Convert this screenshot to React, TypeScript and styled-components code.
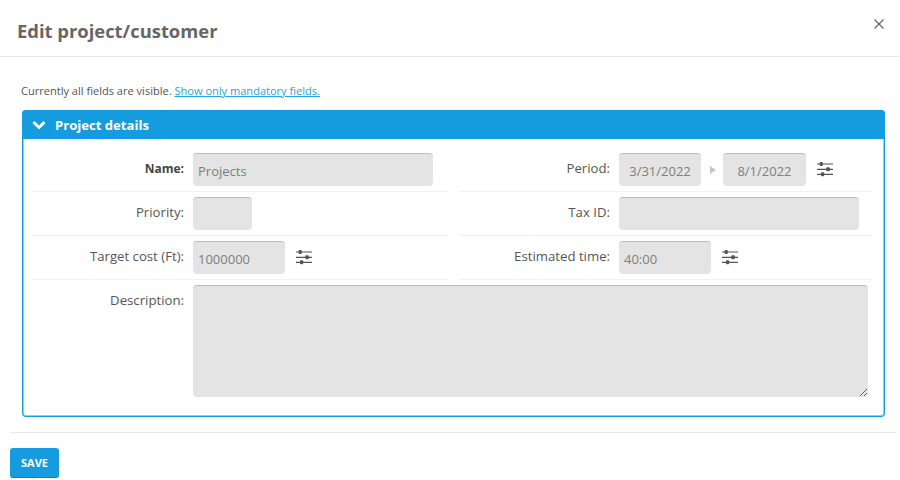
import styled, { createGlobalStyle } from "styled-components";

const GlobalStyle = createGlobalStyle`
  html, body {
    margin: 0;
    padding: 0;
    background: #fff;
    overflow: hidden;
  }
  body {
    font-family: "Open Sans", "Liberation Sans", sans-serif;
    color: #555;
  }
  * {
    box-sizing: border-box;
  }
`;

const Page = styled.div`
  width: 900px;
  height: 480px;
`;

const Header = styled.header`
  height: 57px;
  display: flex;
  align-items: flex-start;
  justify-content: space-between;
  padding: 18px 15px 0 17px;
  border-bottom: 1px solid #e9e9e9;
`;

const Title = styled.h1`
  margin: 0;
  font-size: 18.4px;
  line-height: 26px;
  font-weight: 700;
  color: #666;
`;

const CloseButton = styled.button`
  border: none;
  background: none;
  padding: 0;
  width: 12px;
  height: 12px;
  display: flex;
  color: #666;
`;

const Content = styled.div`
  padding: 25px 15px 0 22px;
`;

const Notice = styled.p`
  margin: 0 0 11px -1px;
  font-size: 11.05px;
  line-height: 17px;
  color: #555;
`;

const NoticeLink = styled.a`
  color: #25a5e4;
  text-decoration: underline;
`;

const Panel = styled.section`
  width: 863px;
  height: 307px;
  border: 1px solid #149cde;
  border-top: none;
  border-radius: 4px;
  box-shadow: inset 1px 0 0 #8fd0f1, inset -1px 0 0 #8fd0f1, inset 0 -1px 0 #8fd0f1;
`;

const PanelHeader = styled.div`
  height: 29px;
  margin: 0 -1px;
  padding-left: 10px;
  display: flex;
  align-items: center;
  gap: 9px;
  background: #149cde;
  border-radius: 4px 4px 0 0;
  color: #fff;
  font-size: 13.1px;
  font-weight: 700;
`;

const PanelBody = styled.div`
  padding: 9px 11px 0 9px;
`;

const FieldGrid = styled.div`
  display: grid;
  grid-template-columns: 416px 414px;
  column-gap: 11px;
`;

const Row = styled.div`
  height: 44px;
  padding: 5px 0;
  display: flex;
  align-items: flex-start;
  gap: 9px;
  border-bottom: 1px solid #f1f1f1;
`;

const DescriptionRow = styled(Row)`
  height: auto;
  padding: 5px 0 0;
  border-bottom: none;
`;

const Label = styled.label<{ $bold?: boolean; $width: number }>`
  width: ${(props) => props.$width}px;
  flex: none;
  padding-top: ${(props) => (props.$bold ? 7 : 6)}px;
  text-align: right;
  font-size: ${(props) => (props.$bold ? 12 : 13.2)}px;
  line-height: 18px;
  font-weight: ${(props) => (props.$bold ? 700 : 400)};
  color: ${(props) => (props.$bold ? "#444" : "#555")};
`;

const fieldStyles = `
  display: block;
  border: none;
  border-top: 1px solid #bdbdbd;
  border-radius: 4px;
  background: #e4e4e4;
  outline: none;
  font-family: "Open Sans", "Liberation Sans", sans-serif;
  font-size: 13px;
  color: #78837a;
`;

const Input = styled.input<{ $width: number; $center?: boolean }>`
  ${fieldStyles}
  width: ${(props) => props.$width}px;
  height: 33px;
  padding: 1px ${(props) => (props.$center ? 0 : 5)}px 0;
  text-align: ${(props) => (props.$center ? "center" : "left")};
`;

const TextArea = styled.textarea`
  ${fieldStyles}
  width: 675px;
  height: 112px;
  padding: 5px;
  resize: vertical;
`;

const FieldGroup = styled.div`
  display: flex;
  align-items: center;
  height: 33px;
`;

const RangeArrow = styled.span`
  width: 0;
  height: 0;
  margin: 0 7px 0 9px;
  border-style: solid;
  border-width: 4.5px 0 4.5px 6px;
  border-color: transparent transparent transparent #c4c4c4;
`;

const Tune = styled.svg`
  width: 16px;
  height: 15px;
  margin-left: 11px;
  flex: none;
  color: #555;
`;

const Footer = styled.footer`
  margin: 15px 4px 0 10px;
  padding-top: 15px;
  border-top: 1px solid #e9e9e9;
`;

const SaveButton = styled.button`
  width: 49px;
  height: 30px;
  padding: 0;
  border: none;
  border-bottom: 1px solid #0f7fb6;
  border-radius: 3px;
  background: #149cde;
  color: #fff;
  font-family: "Open Sans", "Liberation Sans", sans-serif;
  font-size: 11px;
  font-weight: 700;
`;

function TuneIcon() {
  return (
    <Tune viewBox="0 0 16 15" aria-hidden="true">
      <path d="M0 2H16M0 7.3H16M0 12.3H16" stroke="currentColor" strokeWidth="1.2" fill="none" />
      <rect x="2.6" y="0" width="3.2" height="4" rx="1" fill="currentColor" />
      <rect x="9.3" y="5.3" width="3.6" height="4" rx="1" fill="currentColor" />
      <rect x="4" y="10.3" width="3.2" height="4" rx="1" fill="currentColor" />
    </Tune>
  );
}

export default function App() {
  return (
    <Page>
      <GlobalStyle />
      <Header>
        <Title>Edit project/customer</Title>
        <CloseButton aria-label="Close">
          <svg viewBox="0 0 12 12" width="12" height="12" aria-hidden="true">
            <path d="M1.5 1.5L10.5 10.5M10.5 1.5L1.5 10.5" stroke="currentColor" strokeWidth="1.2" fill="none" />
          </svg>
        </CloseButton>
      </Header>
      <Content>
        <Notice>
          Currently all fields are visible. <NoticeLink href="#">Show only mandatory fields.</NoticeLink>
        </Notice>
        <Panel>
          <PanelHeader>
            <svg viewBox="0 0 14 10" width="14" height="10" aria-hidden="true">
              <path d="M1.5 2L7 7.5L12.5 2" stroke="currentColor" strokeWidth="3" fill="none" />
            </svg>
            Project details
          </PanelHeader>
          <PanelBody>
            <FieldGrid>
              <Row>
                <Label $bold $width={152}>Name:</Label>
                <Input $width={240} value="Projects" readOnly />
              </Row>
              <Row>
                <Label $width={151}>Period:</Label>
                <FieldGroup>
                  <Input $width={82} $center value="3/31/2022" readOnly />
                  <RangeArrow />
                  <Input $width={83} $center value="8/1/2022" readOnly />
                  <TuneIcon />
                </FieldGroup>
              </Row>
              <Row>
                <Label $width={152}>Priority:</Label>
                <Input $width={59} readOnly />
              </Row>
              <Row>
                <Label $width={151}>Tax ID:</Label>
                <Input $width={240} readOnly />
              </Row>
              <Row>
                <Label $width={152}>Target cost (Ft):</Label>
                <FieldGroup>
                  <Input $width={92} value="1000000" readOnly />
                  <TuneIcon />
                </FieldGroup>
              </Row>
              <Row>
                <Label $width={151}>Estimated time:</Label>
                <FieldGroup>
                  <Input $width={92} value="40:00" readOnly />
                  <TuneIcon />
                </FieldGroup>
              </Row>
            </FieldGrid>
            <DescriptionRow>
              <Label $width={152}>Description:</Label>
              <TextArea readOnly />
            </DescriptionRow>
          </PanelBody>
        </Panel>
      </Content>
      <Footer>
        <SaveButton>SAVE</SaveButton>
      </Footer>
    </Page>
  );
}
